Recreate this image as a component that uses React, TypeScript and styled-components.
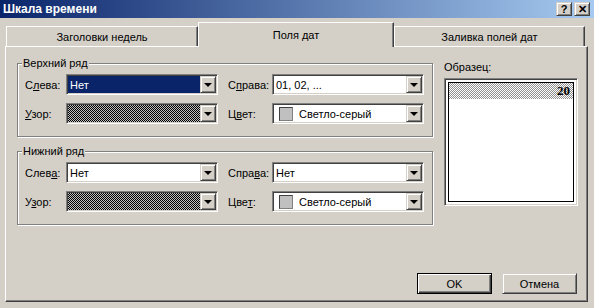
import React from 'react';
import styled, { createGlobalStyle, css } from 'styled-components';

const GlobalStyle = createGlobalStyle`
  html, body {
    margin: 0;
    padding: 0;
    background: #d4d0c8;
  }
  body {
    font-family: 'Liberation Sans', Arial, sans-serif;
    font-size: 11px;
    color: #000;
  }
`;

const sunken = css`
  border: 1px solid;
  border-color: #808080 #ffffff #ffffff #808080;
  box-shadow: inset 1px 1px 0 #404040, inset -1px -1px 0 #d4d0c8;
`;

const raised = css`
  border: 1px solid;
  border-color: #d4d0c8 #404040 #404040 #d4d0c8;
  box-shadow: inset 1px 1px 0 #ffffff, inset -1px -1px 0 #808080;
`;

const checker = (a: string, b: string) => css`
  background-color: ${b};
  background-image: conic-gradient(${a} 25%, ${b} 0 50%, ${a} 0 75%, ${b} 0);
  background-size: 2px 2px;
`;

const Window = styled.div`
  width: 594px;
  height: 308px;
  display: flex;
  flex-direction: column;
  background: #d4d0c8;
  overflow: hidden;
`;

const TitleBar = styled.div`
  height: 18px;
  display: flex;
  align-items: center;
  padding: 0 4px 0 3px;
  background: linear-gradient(to right, #0a246a, #a6caf0);
  color: #fff;
`;

const Title = styled.div`
  flex: 1;
  font-weight: bold;
  font-size: 12px;
`;

const CaptionButton = styled.div<{ $gap?: number }>`
  width: 16px;
  height: 14px;
  box-sizing: border-box;
  ${raised};
  background: #d4d0c8;
  color: #000;
  font-weight: bold;
  font-size: 11px;
  line-height: 12px;
  text-align: center;
  margin-left: ${p => p.$gap ?? 0}px;
`;

const TabStrip = styled.div`
  display: flex;
  align-items: flex-end;
  height: 24px;
  margin-top: 4px;
  padding-left: 6px;
  position: relative;
  z-index: 1;
`;

const Tab = styled.div<{ $width: number; $active?: boolean }>`
  width: ${p => p.$width}px;
  height: ${p => (p.$active ? 25 : 20)}px;
  margin-bottom: ${p => (p.$active ? -1 : 0)}px;
  box-sizing: border-box;
  display: flex;
  align-items: center;
  justify-content: center;
  padding-top: ${p => (p.$active ? 0 : 1)}px;
  background: #d4d0c8;
  border-top: 1px solid #fff;
  border-left: 1px solid #fff;
  border-right: 1px solid #404040;
  box-shadow: inset -1px 0 0 #808080;
`;

const Panel = styled.div`
  margin: 0 6px 0 5px;
  height: 256px;
  box-sizing: border-box;
  border-top: 1px solid #fff;
  border-left: 1px solid #fff;
  border-right: 1px solid #404040;
  border-bottom: 1px solid #404040;
  box-shadow: inset -1px -1px 0 #808080;
  display: flex;
  flex-direction: column;
  padding: 10px 0 0 11px;
`;

const Body = styled.div`
  display: flex;
  gap: 11px;
`;

const Groups = styled.div`
  display: flex;
  flex-direction: column;
  gap: 8px;
`;

const Group = styled.fieldset`
  width: 416px;
  margin: 0;
  padding: 0;
  box-sizing: border-box;
  border: 1px solid #808080;
  box-shadow: inset 1px 1px 0 #fff, 1px 1px 0 #fff;
`;

const Legend = styled.legend`
  margin-left: 4px;
  padding: 0 1px;
  background: #d4d0c8;
  line-height: 13px;
`;

const Rows = styled.div`
  display: flex;
  flex-direction: column;
  gap: 8px;
  padding: 4px 6px 12px 7px;
`;

const Row = styled.div`
  display: flex;
  align-items: center;
`;

const Label = styled.div<{ $width: number; $indent?: number }>`
  width: ${p => p.$width}px;
  margin-left: ${p => p.$indent ?? 0}px;
  flex: none;
`;

const Combo = styled.div`
  width: 152px;
  height: 21px;
  box-sizing: border-box;
  ${sunken};
  background: #fff;
  display: flex;
  padding: 1px;
`;

const ComboValue = styled.div<{ $selected?: boolean; $pattern?: boolean }>`
  flex: 1;
  display: flex;
  align-items: center;
  gap: 6px;
  padding-left: ${p => (p.$pattern ? 0 : 2)}px;
  white-space: nowrap;
  overflow: hidden;
  ${p => p.$selected && css`
    background: #0a246a;
    color: #fff;
  `}
  ${p => p.$pattern && checker('#000', '#c0c0c0')}
`;

const Swatch = styled.span`
  width: 14px;
  height: 14px;
  box-sizing: border-box;
  margin-left: 3px;
  border: 1px solid;
  border-color: #404040 #808080 #808080 #404040;
  background: #c0c0c0;
  flex: none;
`;

const DropButton = styled.div`
  width: 16px;
  box-sizing: border-box;
  ${raised};
  background: #d4d0c8;
  display: flex;
  align-items: center;
  justify-content: center;
  flex: none;
`;

const Arrow = styled.span`
  width: 0;
  height: 0;
  border-left: 4px solid transparent;
  border-right: 4px solid transparent;
  border-top: 4px solid #000;
  margin-top: 1px;
`;

const SampleColumn = styled.div`
  display: flex;
  flex-direction: column;
  gap: 5px;
  padding-top: 4px;
`;

const SampleBox = styled.div`
  width: 134px;
  height: 128px;
  box-sizing: border-box;
  ${sunken};
  background: #fff;
  padding: 3px;
  display: flex;
`;

const SampleInner = styled.div`
  flex: 1;
  border: 1px solid #000;
  display: flex;
  flex-direction: column;
`;

const SampleHeader = styled.div`
  height: 16px;
  ${checker('#909090', '#ffffff')};
  display: flex;
  align-items: center;
  justify-content: flex-end;
  padding-right: 3px;
  font-weight: bold;
  font-family: 'Liberation Serif', 'Times New Roman', serif;
  font-size: 13px;
`;

const Footer = styled.div`
  margin-top: auto;
  display: flex;
  justify-content: flex-end;
  gap: 10px;
  padding: 0 10px 7px 0;
`;

const Button = styled.div<{ $default?: boolean }>`
  width: 75px;
  height: 21px;
  box-sizing: border-box;
  display: flex;
  align-items: center;
  justify-content: center;
  background: #d4d0c8;
  ${p => (p.$default
    ? css`
        border: 1px solid #000;
        box-shadow: inset 1px 1px 0 #fff, inset -1px -1px 0 #404040, inset -2px -2px 0 #808080;
      `
    : raised)}
`;

type ComboProps = {
  value?: string;
  selected?: boolean;
  pattern?: boolean;
  swatch?: boolean;
};

const ComboBox = ({ value, selected, pattern, swatch }: ComboProps) => (
  <Combo>
    <ComboValue $selected={selected} $pattern={pattern}>
      {swatch && <Swatch />}
      {value}
    </ComboValue>
    <DropButton>
      <Arrow />
    </DropButton>
  </Combo>
);

type GroupProps = {
  title: string;
  left: React.ReactNode;
  right: React.ReactNode;
  pattern: React.ReactNode;
  color: React.ReactNode;
  leftValue: string;
  rightValue: string;
  selected?: boolean;
};

const RowGroup = ({ title, left, right, pattern, color, leftValue, rightValue, selected }: GroupProps) => (
  <Group>
    <Legend>{title}</Legend>
    <Rows>
      <Row>
        <Label $width={41}>{left}</Label>
        <ComboBox value={leftValue} selected={selected} />
        <Label $width={44} $indent={10}>{right}</Label>
        <ComboBox value={rightValue} />
      </Row>
      <Row>
        <Label $width={41}>{pattern}</Label>
        <ComboBox pattern />
        <Label $width={44} $indent={10}>{color}</Label>
        <ComboBox swatch value='Светло-серый' />
      </Row>
    </Rows>
  </Group>
);

const App = () => (
  <Window>
    <GlobalStyle />
    <TitleBar>
      <Title>Шкала времени</Title>
      <CaptionButton>?</CaptionButton>
      <CaptionButton $gap={2}>✕</CaptionButton>
    </TitleBar>
    <TabStrip>
      <Tab $width={192}>Заголовки недель</Tab>
      <Tab $width={196} $active>Поля дат</Tab>
      <Tab $width={191}>Заливка полей дат</Tab>
    </TabStrip>
    <Panel>
      <Body>
        <Groups>
          <RowGroup
            title='Верхний ряд'
            left={<>С<u>л</u>ева:</>}
            right={<>С<u>п</u>рава:</>}
            pattern={<><u>У</u>зор:</>}
            color={<>Ц<u>в</u>ет:</>}
            leftValue='Нет'
            rightValue='01, 02, ...'
            selected
          />
          <RowGroup
            title='Нижний ряд'
            left={<>Слев<u>а</u>:</>}
            right={<>Спра<u>в</u>а:</>}
            pattern={<>У<u>з</u>ор:</>}
            color={<>Цве<u>т</u>:</>}
            leftValue='Нет'
            rightValue='Нет'
          />
        </Groups>
        <SampleColumn>
          <Label $width={134}>Образец:</Label>
          <SampleBox>
            <SampleInner>
              <SampleHeader>20</SampleHeader>
            </SampleInner>
          </SampleBox>
        </SampleColumn>
      </Body>
      <Footer>
        <Button $default>OK</Button>
        <Button>Отмена</Button>
      </Footer>
    </Panel>
  </Window>
);

export default App;
